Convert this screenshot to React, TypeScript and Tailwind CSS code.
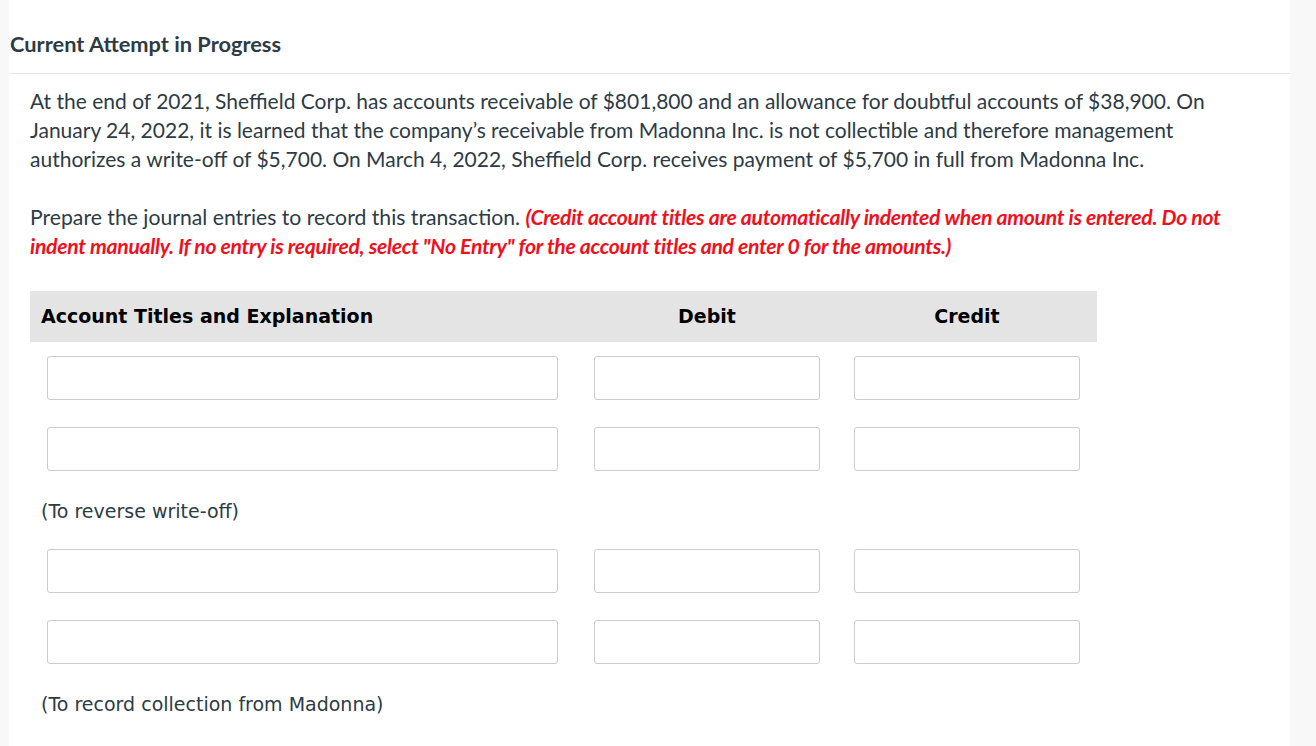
import React from "react";

const lato = { fontFamily: "Lato, 'Open Sans', sans-serif" };

function Input({ w }: { w: string }) {
  return <div className={`${w} h-[44px] border border-[#cccccc] rounded-[3px] bg-white`} />;
}

function Row() {
  return (
    <div className="grid grid-cols-[547px_260px_260px]">
      <div className="pl-[17px] pr-[19px]">
        <Input w="w-full" />
      </div>
      <div className="px-[17px]">
        <Input w="w-full" />
      </div>
      <div className="px-[17px]">
        <Input w="w-full" />
      </div>
    </div>
  );
}

export default function App() {
  return (
    <div className="min-h-screen bg-[#f8f8f8] flex">
      <div className="ml-[9px] w-[1281px] bg-white min-h-[746px]">
        <div className="pl-[1px] pt-[31px] pb-[16px] border-b border-[#e8e8e8]">
          <h2 className="text-[21.8px] leading-[26px] font-bold text-[#2d3b45]" style={lato}>
            Current Attempt in Progress
          </h2>
        </div>
        <div className="pl-[21px] pr-[40px] pt-[12px] leading-[29px] text-[#2d3b45]" style={lato}>
          <p className="text-[21px]">
            At the end of 2021, Sheffield Corp. has accounts receivable of $801,800 and an allowance for doubtful accounts of $38,900. On January 24, 2022, it is learned that the company’s receivable from Madonna Inc. is not collectible and therefore management authorizes a write-off of $5,700. On March 4, 2022, Sheffield Corp. receives payment of $5,700 in full from Madonna Inc.
          </p>
          <p className="mt-[30px] pr-[10px] text-[21.2px]">
            Prepare the journal entries to record this transaction.{" "}
            <span className="font-bold italic text-[#f0101c] tracking-[-0.3px]">
              (Credit account titles are automatically indented when amount is entered. Do not indent manually. If no entry is required, select "No Entry" for the account titles and enter 0 for the amounts.)
            </span>
          </p>
        </div>
        <div className="ml-[21px] mt-[30px] w-[1067px]" style={{ fontFamily: "Tahoma, 'DejaVu Sans', Verdana, sans-serif" }}>
          <div className="grid grid-cols-[547px_260px_260px] bg-[#e4e4e4] h-[51px] items-center text-[19px] font-bold text-black">
            <div className="pl-[11px]">Account Titles and Explanation</div>
            <div className="text-center">Debit</div>
            <div className="text-center">Credit</div>
          </div>
          <div className="pt-[14px] flex flex-col gap-[27px]">
            <Row />
            <Row />
          </div>
          <div className="pl-[11px] pt-[26px] h-[78px] text-[19px] text-[#2d3b45]">(To reverse write-off)</div>
          <div className="flex flex-col gap-[27px]">
            <Row />
            <Row />
          </div>
          <div className="pl-[11px] pt-[26px] text-[19px] text-[#2d3b45]">(To record collection from Madonna)</div>
        </div>
      </div>
    </div>
  );
}
